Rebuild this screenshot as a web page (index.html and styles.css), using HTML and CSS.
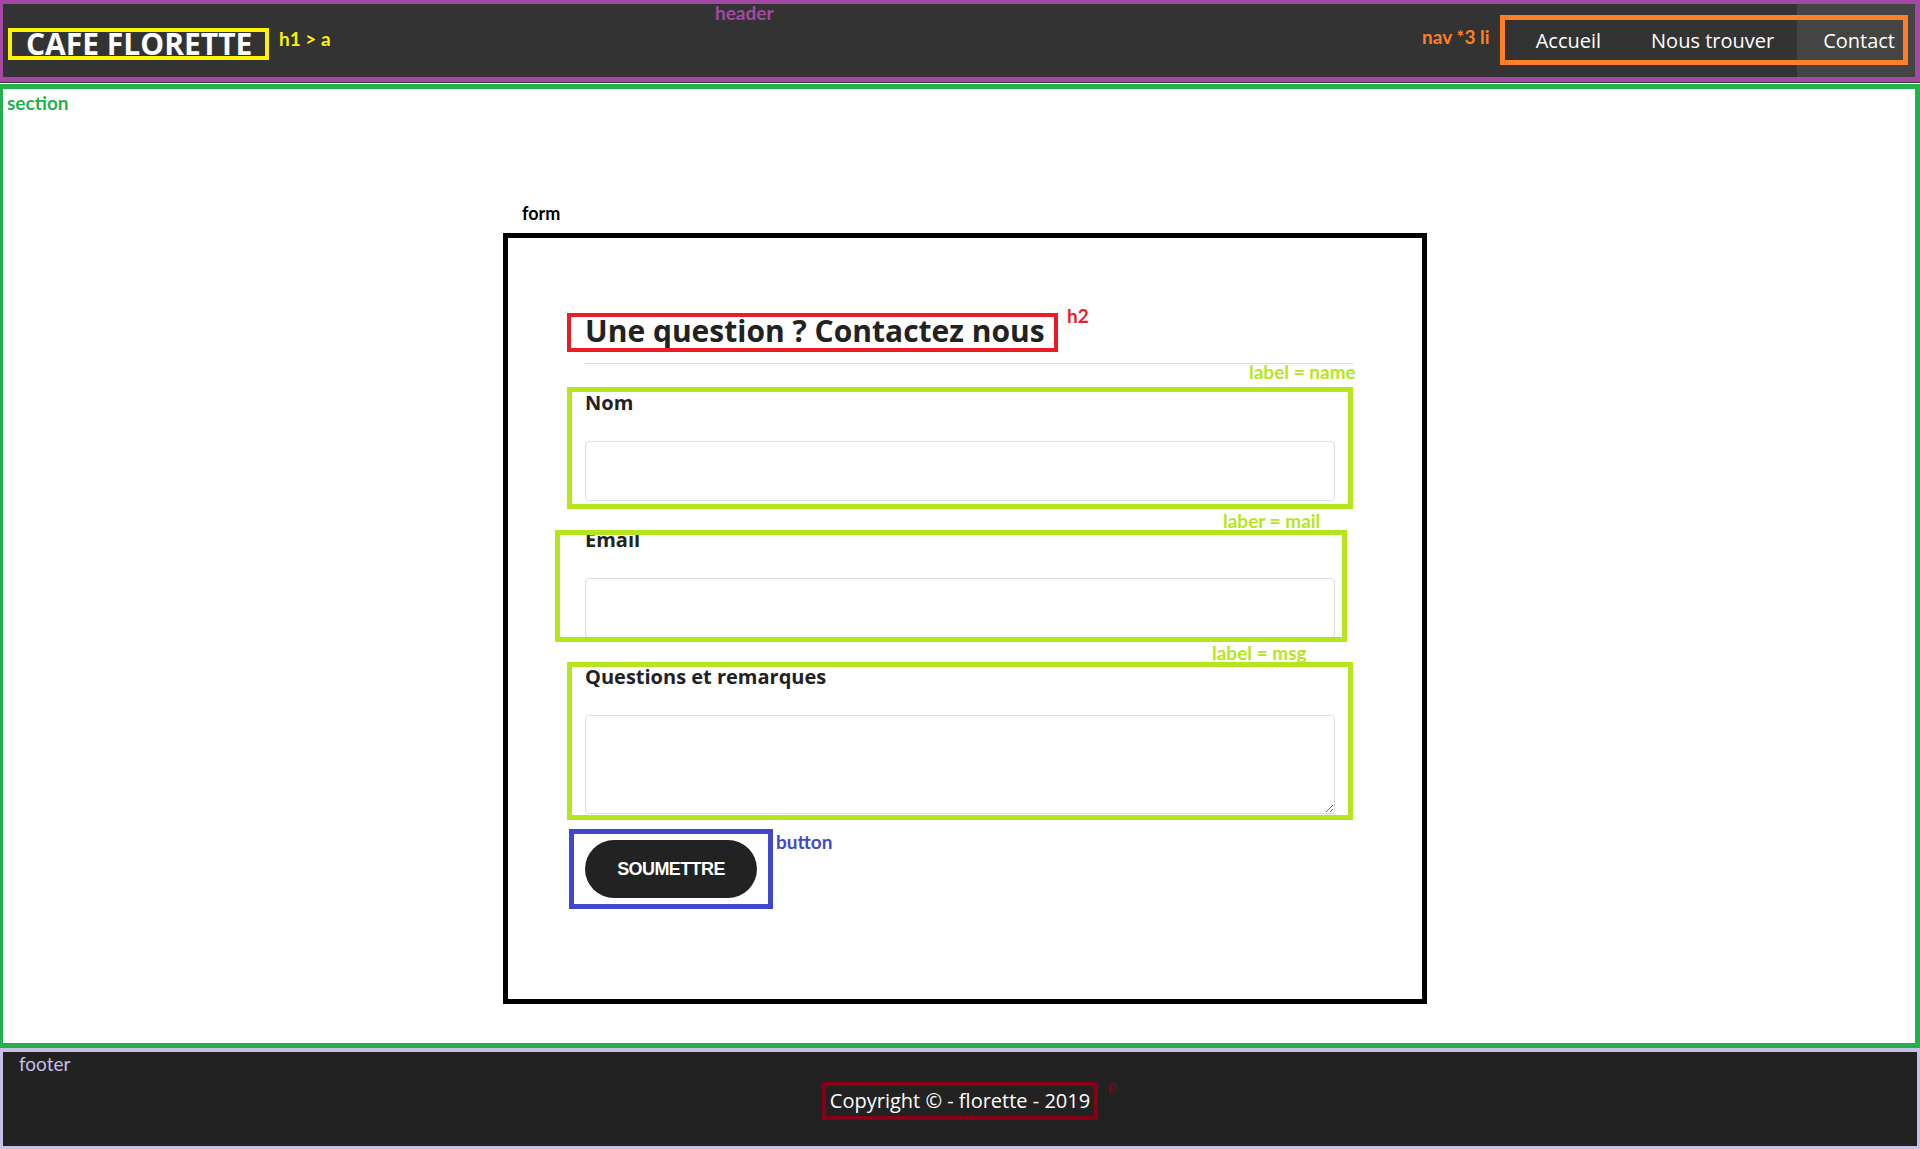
FILE: index.html
```html
<!DOCTYPE html>
<html lang="fr">
<head>
<meta charset="utf-8">
<title>Cafe Florette - Contact</title>
<link rel="stylesheet" href="styles.css">
</head>
<body>
<header class="site-header">
  <span class="note note-header">header</span>
  <h1 class="brand"><a href="#">CAFE FLORETTE</a></h1>
  <span class="note note-h1">h1 &gt; a</span>
  <span class="note note-nav">nav *3 li</span>
  <nav class="nav">
    <ul>
      <li><a href="#">Accueil</a></li>
      <li><a href="#">Nous trouver</a></li>
      <li class="active"><a href="#">Contact</a></li>
    </ul>
  </nav>
  <span class="frame frame-nav"></span>
</header>

<section class="main">
  <span class="note note-section">section</span>
  <form class="contact" action="#">
    <span class="note note-form">form</span>
    <h2>Une question ? Contactez nous</h2>
    <hr>
    <label for="name">Nom</label>
    <input id="name" name="name" type="text">
    <label for="mail">Email</label>
    <input id="mail" name="mail" type="email">
    <label for="msg">Questions et remarques</label>
    <textarea id="msg" name="msg"></textarea>
    <button type="submit">Soumettre</button>

    <span class="frame frame-h2"></span>
    <span class="note note-h2">h2</span>
    <span class="frame frame-lime frame-name"></span>
    <span class="note note-lime note-name">label = name</span>
    <span class="frame frame-lime frame-mail"></span>
    <span class="note note-lime note-mail">laber = mail</span>
    <span class="frame frame-lime frame-msg"></span>
    <span class="note note-lime note-msg">label = msg</span>
    <span class="frame frame-button"></span>
    <span class="note note-button">button</span>
  </form>
</section>

<footer class="site-footer">
  <span class="note note-footer">footer</span>
  <p>Copyright © - florette - 2019</p>
  <span class="note note-p">p</span>
</footer>
</body>
</html>
```

FILE: styles.css
```css
* { box-sizing: border-box; }

html, body {
  margin: 0;
  padding: 0;
}

body {
  width: 1920px;
  height: 1149px;
  overflow: hidden;
  background: #fff;
  color: #222;
  font-family: "Open Sans", "Liberation Sans", sans-serif;
}

/* ---------- annotations ---------- */
.note {
  position: absolute;
  z-index: 3;
  font-family: Lato, "Open Sans", sans-serif;
  font-weight: 700;
  font-size: 19px;
  line-height: 19px;
  white-space: nowrap;
}

.frame {
  position: absolute;
  z-index: 2;
  border-style: solid;
  pointer-events: none;
}

/* ---------- header ---------- */
.site-header {
  position: relative;
  display: flex;
  align-items: stretch;
  height: 82px;
  margin-bottom: 2px;
  padding-left: 5px;
  background: #333;
  border-style: solid;
  border-color: #a349a4;
  border-width: 4px 5px 5px 3px;
  box-shadow: 0 1px 0 #3a3a3a;
}

.brand {
  display: flex;
  align-self: flex-start;
  margin: 24px 0 0;
  font-size: 30px;
  font-weight: 700;
  line-height: 24px;
}

.brand a {
  display: block;
  padding: 0 13px 0 14px;
  border: 4px solid #fff200;
  color: #fff;
  text-decoration: none;
}

.nav {
  margin-left: auto;
}

.nav ul {
  display: flex;
  height: 100%;
  margin: 0;
  padding: 0;
  list-style: none;
}

.nav li a {
  display: block;
  padding: 1px 23px 0;
  color: #fff;
  font-size: 20px;
  line-height: 72px;
  text-decoration: none;
}

.nav li:first-child a {
  padding-right: 27px;
  padding-left: 19px;
}

.nav li.active a {
  padding-left: 26px;
  padding-right: 20px;
}

.nav li.active {
  background: #444;
}

.note-header { left: 712px; top: -1px; color: #a349a4; }
.note-h1 { left: 276px; top: 25px; color: #fff200; }
.note-nav { left: 1419px; top: 23px; color: #ff7f27; }

.frame-nav {
  left: 1497px;
  top: 11px;
  width: 408px;
  height: 50px;
  border-width: 5px;
  border-color: #ff7f27;
}

/* ---------- section ---------- */
.main {
  position: relative;
  height: 964px;
  padding: 144px 0 39px;
  border-style: solid;
  border-color: #22b14c;
  border-width: 5px 5px 5px 3px;
}

.note-section { left: 4px; top: 4px; color: #22b14c; }

/* ---------- form ---------- */
.contact {
  position: relative;
  width: 924px;
  margin-left: 500px;
  padding: 73px 0 101px 77px;
  border: 5px solid #000;
}

.note-form { left: 14px; top: -34px; color: #000; font-size: 18px; }

.contact h2 {
  margin: 0;
  font-size: 30px;
  font-weight: 700;
  line-height: 40px;
  color: #222;
}

.contact hr {
  width: 768px;
  height: 0;
  margin: 12px 0 23px;
  border: 0;
  border-top: 1px solid #dadada;
}

.contact label {
  display: block;
  margin-bottom: 25px;
  padding-top: 2px;
  font-size: 20px;
  font-weight: 700;
  line-height: 27px;
  color: #222;
}

.contact input,
.contact textarea {
  display: block;
  width: 750px;
  margin: 0 0 23px;
  border: 1px solid #dcdcdc;
  border-radius: 4px;
  background: #fff;
  font-family: inherit;
  font-size: 16px;
}

.contact input { height: 60px; }

.contact textarea {
  height: 99px;
  margin-bottom: 0;
  resize: vertical;
}

.contact button {
  display: block;
  width: 172px;
  height: 58px;
  margin-top: 26px;
  border: 0;
  border-radius: 29px;
  background: #222;
  color: #fff;
  font-family: "Liberation Sans", Arial, sans-serif;
  font-size: 18px;
  font-weight: 700;
  letter-spacing: -0.6px;
  text-transform: uppercase;
}

.frame-h2 {
  left: 59px;
  top: 75px;
  width: 491px;
  height: 39px;
  border-width: 4px;
  border-color: #ed1c24;
}

.note-h2 { left: 559px; top: 68px; color: #ed1c24; }

.frame-lime {
  border-width: 5px;
  border-color: #b5e61d;
}

.frame-name { left: 59px; top: 149px; width: 786px; height: 122px; }
.frame-mail { left: 47px; top: 292px; width: 792px; height: 112px; }
.frame-msg { left: 59px; top: 424px; width: 786px; height: 158px; }

.note-lime { color: #b5e61d; }
.note-name { left: 741px; top: 124px; }
.note-mail { left: 715px; top: 273px; }
.note-msg { left: 704px; top: 405px; }

.frame-button {
  left: 61px;
  top: 591px;
  width: 204px;
  height: 80px;
  border-width: 5px;
  border-color: #3f48cc;
}

.note-button { left: 268px; top: 594px; color: #3f48cc; }

/* ---------- footer ---------- */
.site-footer {
  position: relative;
  display: flex;
  align-items: center;
  justify-content: center;
  height: 101px;
  padding-top: 3px;
  background: #222;
  border-style: solid;
  border-color: #c8bfe7;
  border-width: 4px 3px 3px 3px;
}

.site-footer p {
  margin: 0;
  padding: 0 4px;
  border: 4px solid #880015;
  color: #fff;
  font-size: 20px;
  line-height: 30px;
}

.note-footer { left: 16px; top: 2px; color: #c8bfe7; font-weight: 400; }
.note-p { left: 1105px; top: 24px; color: #880015; font-size: 15px; font-weight: 400; }
```
